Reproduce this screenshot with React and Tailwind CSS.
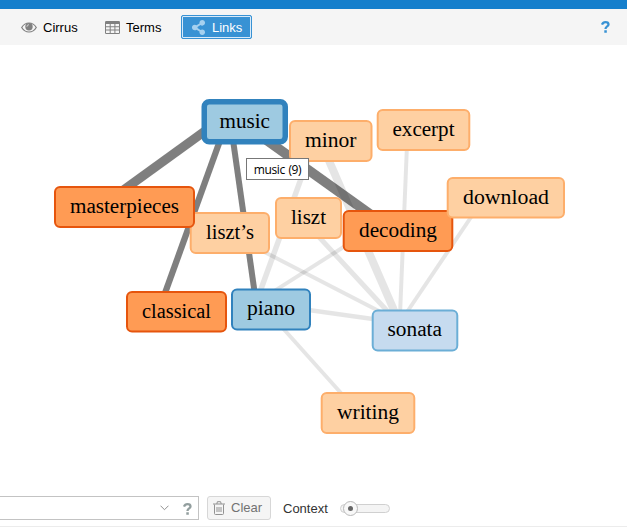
import { FaShareAlt } from "react-icons/fa";

const palettes = {
  orange: { fill: "#ff9b54", stroke: "#e6550d" },
  peach: { fill: "#fed0a2", stroke: "#fdae6b" },
  blue: { fill: "#9ecae1", stroke: "#3182bd" },
  pale: { fill: "#c6dbef", stroke: "#6baed6" },
};

// x, y, w, h describe the outer edge of each box; the text starts at tx
const nodes = [
  { label: "classical", x: 126, y: 291, w: 101, h: 41.5, tx: 142, tw: 69, base: 317.5, tone: "orange" },
  { label: "liszt’s", x: 189.7, y: 212, w: 80.3, h: 42, tx: 206, tw: 48, base: 238.5, tone: "peach" },
  { label: "masterpieces", x: 54, y: 186, w: 141, h: 42, tx: 70, tw: 109, base: 212.5, tone: "orange" },
  { label: "piano", x: 231, y: 288.5, w: 80, h: 42, tx: 247, tw: 48, base: 314.5, tone: "blue" },
  { label: "minor", x: 289, y: 120, w: 83.5, h: 42, tx: 305, tw: 51.5, base: 146.5, tone: "peach" },
  { label: "liszt", x: 275, y: 197, w: 67, h: 42, tx: 291, tw: 35, base: 223.5, tone: "peach" },
  { label: "decoding", x: 342.7, y: 210, w: 110.6, h: 42, tx: 359, tw: 78, base: 236.5, tone: "orange" },
  { label: "excerpt", x: 376.7, y: 109, w: 93.6, h: 42, tx: 392.5, tw: 62, base: 135.5, tone: "peach" },
  { label: "download", x: 446.7, y: 177, w: 118.3, h: 41.5, tx: 463, tw: 86, base: 203.5, tone: "peach" },
  { label: "sonata", x: 371.7, y: 309.5, w: 86.6, h: 42, tx: 387.5, tw: 54.5, base: 335.5, tone: "pale" },
  { label: "writing", x: 320.7, y: 392, w: 94.6, h: 42, tx: 337, tw: 62, base: 418.5, tone: "peach" },
  { label: "music", x: 201.5, y: 99, w: 86.5, h: 45.5, tx: 219.5, tw: 50.5, base: 127.5, tone: "blue", active: true },
];

const faint = [
  [325.2, 152, 397.8, 319, 8],
  [407, 145, 400, 315, 4],
  [477.2, 208, 402.3, 319, 4],
  [311.6, 229, 394.7, 319, 5],
  [260, 249.7, 388, 315.7, 4],
  [305, 309.5, 380, 320, 4.7],
  [310.7, 152, 257.6, 298.5, 5.5],
  [349.5, 243.3, 269, 294.4, 4],
  [275.5, 320, 349, 402, 4],
];

const strong = [
  [212, 126, 118, 194, 9],
  [222, 135, 162.5, 300, 6.3],
  [232.3, 135, 255.7, 300, 6],
  [258, 134, 378.3, 220, 9.7],
];

function Graph() {
  return (
    <svg className="block h-[445px] w-full" viewBox="0 45 627 445" fontFamily="'Palatino Linotype', 'Liberation Serif', serif" fontSize="20">
      <g stroke="#000" strokeOpacity="0.1">
        {faint.map(([x1, y1, x2, y2, width], i) => (
          <line key={i} x1={x1} y1={y1} x2={x2} y2={y2} strokeWidth={width} />
        ))}
      </g>
      <g stroke="#000" strokeOpacity="0.5">
        {strong.map(([x1, y1, x2, y2, width], i) => (
          <line key={i} x1={x1} y1={y1} x2={x2} y2={y2} strokeWidth={width} />
        ))}
      </g>
      {nodes.map((n) => {
        const s = n.active ? 5.5 : 2;
        return (
          <g key={n.label}>
            <rect x={n.x + s / 2} y={n.y + s / 2} width={n.w - s} height={n.h - s} rx="5" fill={palettes[n.tone].fill} stroke={palettes[n.tone].stroke} strokeWidth={s} />
            <text x={n.tx} y={n.base} textLength={n.tw} lengthAdjust="spacingAndGlyphs">{n.label}</text>
          </g>
        );
      })}
    </svg>
  );
}

function EyeIcon() {
  return (
    <svg className="h-[11px] w-4" viewBox="0 0 16 11">
      <path d="M.7 5.500C4.300-.500 11.700-.500 15.300 5.500C11.700 11.500 4.300 11.500.7 5.500Z" fill="none" stroke="#808080" strokeWidth="1.2" />
      <circle cx="8" cy="4.800" r="3.700" fill="#808080" />
      <path d="M5.900 4.800A2.100 2.100 0 0 1 8 2.700" fill="none" stroke="#e4e4e4" strokeWidth=".8" />
    </svg>
  );
}

function TableIcon() {
  return (
    <svg className="h-[13px] w-[15px]" viewBox="0 0 15 13">
      <rect width="15" height="13" rx="1.300" fill="#808080" />
      <path d="M1 3h3.700v2.300H1zM5.700 3h3.700v2.300H5.700zM10.400 3H14v2.300h-3.600zM1 6.300h3.700v2.300H1zM5.700 6.300h3.700v2.300H5.700zM10.400 6.300H14v2.300h-3.600zM1 9.600h3.700V12H1zM5.700 9.600h3.700V12H5.700zM10.400 9.600H14V12h-3.600z" fill="#f5f5f5" />
    </svg>
  );
}

function HelpIcon({ className }) {
  return (
    <svg className={className} viewBox="0 0 9 12" fill="none" stroke="currentColor" strokeWidth="2.300">
      <path d="M1 3.700C1.700 1.900 2.800 1.200 4.400 1.200c1.800 0 3.100 1 3.100 2.300 0 2-3 1.900-3 4.500M3.300 10.500h2.500" />
    </svg>
  );
}

function TrashIcon() {
  return (
    <svg className="h-[14px] w-3" viewBox="0 0 12 14" fill="none" stroke="#929292">
      <path d="M0 3h12M3.800 3l.6-2.300h3.200L8.200 3M1.500 3.500v9q0 1 1 1h7q1 0 1-1v-9M4 6v5M6 6v5M8 6v5" />
    </svg>
  );
}

export default function App() {
  return (
    <div className="relative flex h-[527px] w-[627px] flex-col overflow-hidden bg-white font-['Liberation_Sans',Arial,sans-serif] text-[13px] text-black">
      <div className="h-[9px] shrink-0 bg-[#157fcc]" />
      <header className="flex h-9 shrink-0 items-center bg-[#f5f5f5] pl-[21px] pr-[17px]">
        <div className="flex w-[84px] items-center gap-[6px]">
          <EyeIcon />
          <span className="pt-px">Cirrus</span>
        </div>
        <div className="flex w-[76px] items-center gap-[6px]">
          <TableIcon />
          <span className="pt-px">Terms</span>
        </div>
        <div className="flex h-6 w-[71px] items-center gap-[6px] rounded-[2px] border border-[#3892d4] bg-[#3892d4] pl-[9px] text-white shadow-[inset_0_0_0_1px_#d8eafa]">
          <FaShareAlt className="size-[15px] text-[#a5d0ef]" />
          <span className="pt-px">Links</span>
        </div>
        <HelpIcon className="ml-auto h-3 w-[9px] text-[#3892d4]" />
      </header>
      <Graph />
      <footer className="mt-[6px] flex h-6 shrink-0 items-center">
        <div className="flex h-6 w-[199px] shrink-0 items-center justify-end gap-[14px] border border-l-0 border-[#c3c3c3] pr-[6px]">
          <svg className="h-[6px] w-[9px]" viewBox="0 0 9 6" fill="none" stroke="#919191"><path d="M.5.7l4 4 4-4" /></svg>
          <HelpIcon className="mt-[2px] h-3 w-[9px] text-[#929e9e]" />
        </div>
        <button className="ml-2 flex h-6 w-16 items-center gap-[6px] rounded-[3px] border border-[#d7d7d7] bg-[#f5f5f5] pl-[5px] text-[#727272]">
          <TrashIcon />
          <span>Clear</span>
        </button>
        <span className="ml-3 w-[57px] pt-px text-[#333]">Context</span>
        <div className="flex h-[9px] w-[50px] items-center rounded-full border border-[#d0d0d0] bg-[#f4f4f4] pl-[2px]">
          <div className="flex size-[15px] shrink-0 items-center justify-center rounded-full border border-[#b9b9b9] bg-[#f8f8f8]">
            <div className="size-[5px] rounded-full bg-[#666]" />
          </div>
        </div>
      </footer>
      <div className="mt-[6px] h-px shrink-0 bg-[#ececec]" />
      <div className="absolute left-[246px] top-[158px] flex h-[22px] w-[63px] items-center justify-center border border-[#777] bg-white pt-[2px] font-['Open_Sans','Noto_Sans',sans-serif] text-xs tracking-[-0.4px] [word-spacing:1px]">
        music (9)
      </div>
    </div>
  );
}
